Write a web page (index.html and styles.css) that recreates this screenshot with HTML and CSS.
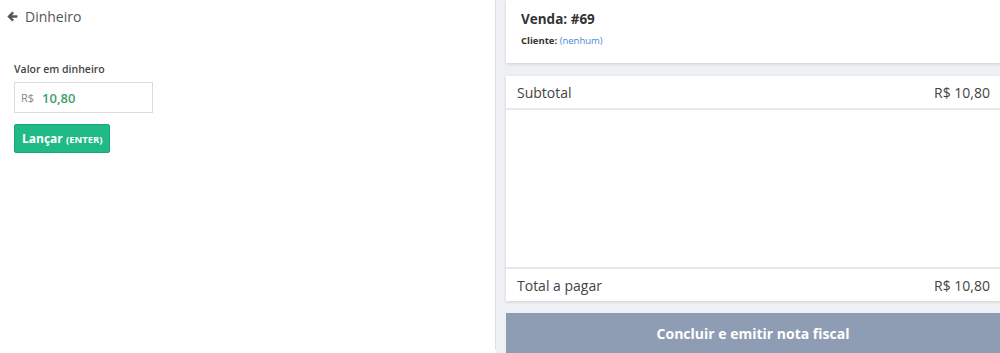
FILE: index.html
```html
<!DOCTYPE html>
<html lang="pt-BR">
<head>
    <meta charset="UTF-8">
    <meta name="viewport" content="width=device-width, initial-scale=1.0">
    <title>PDV - Pagamento</title>
    <link rel="stylesheet" href="styles.css">
</head>
<body>
    <div class="layout">
        <section class="payment">
            <header class="payment-header">
                <svg class="back-icon" viewBox="0 0 10 10" width="11" height="11">
                    <path d="M9.4 5H2.2M5.6 1.2L1.8 5 5.6 8.8" fill="none" stroke="#555" stroke-width="2.1"/>
                </svg>
                <span>Dinheiro</span>
            </header>
            <form class="cash-form">
                <label for="cash">Valor em dinheiro</label>
                <div class="money-input">
                    <span class="currency">R$</span>
                    <input type="text" id="cash" value="10,80">
                </div>
                <button type="button" class="btn-launch">Lançar <small>(ENTER)</small></button>
            </form>
        </section>
        <aside class="summary">
            <div class="card sale-info">
                <h2>Venda: #69</h2>
                <p><strong>Cliente:</strong> <a href="#">(nenhum)</a></p>
            </div>
            <div class="card totals">
                <div class="row">
                    <span>Subtotal</span>
                    <span>R$ 10,80</span>
                </div>
                <div class="items"></div>
                <div class="row total">
                    <span>Total a pagar</span>
                    <span>R$ 10,80</span>
                </div>
            </div>
            <button type="button" class="btn-finish">Concluir e emitir nota fiscal</button>
        </aside>
    </div>
</body>
</html>
```

FILE: styles.css
```css
body {
    margin: 0;
    font-family: "Open Sans", Arial, sans-serif;
    background-color: #ffffff;
    color: #444;
}
.layout {
    display: flex;
    height: 353px;
    overflow: hidden;
}
.payment {
    width: 495px;
    border-right: 1px solid #dcdfe5;
    height: 350px;
}
.payment-header {
    display: flex;
    align-items: center;
    gap: 7px;
    padding: 6px 0 0 7px;
    font-size: 14px;
    color: #555;
    height: 20px;
}
.cash-form {
    padding: 36px 0 0 14px;
}
.cash-form label {
    display: block;
    font-size: 10.5px;
    font-weight: 600;
    color: #444;
    margin-bottom: 6px;
}
.money-input {
    display: flex;
    align-items: center;
    width: 131px;
    height: 29px;
    border: 1px solid #dcdcdc;
    padding-left: 6px;
}
.currency {
    font-size: 11px;
    color: #888;
    margin-right: 8px;
}
.money-input input {
    border: none;
    outline: none;
    width: 80px;
    padding: 0;
    font-family: inherit;
    font-size: 13px;
    font-weight: 600;
    color: #3f9f6d;
}
.btn-launch {
    margin-top: 11px;
    height: 29px;
    padding: 0 7px;
    border: 1px solid #1aa878;
    border-radius: 2px;
    background-color: #1fba86;
    color: white;
    font-family: inherit;
    font-size: 12px;
    font-weight: 700;
}
.btn-launch small {
    font-size: 9.5px;
}
.summary {
    flex: 1;
    background-color: #eef0f4;
    padding-left: 10px;
    display: flex;
    flex-direction: column;
}
.summary > * {
    flex-shrink: 0;
}
.card {
    background: white;
    box-shadow: 0 1px 3px rgba(0, 0, 0, 0.14);
}
.sale-info {
    height: 63px;
    padding: 0 15px;
    box-sizing: border-box;
}
.sale-info h2 {
    margin: 0;
    padding-top: 10px;
    font-size: 13.5px;
    font-weight: 700;
    color: #333;
}
.sale-info p {
    margin: 6px 0 0;
    font-size: 9.5px;
    color: #333;
}
.sale-info a {
    color: #4a88d8;
    text-decoration: none;
}
.totals {
    margin-top: 13px;
    display: flex;
    flex-direction: column;
    height: 225px;
}
.row {
    display: flex;
    justify-content: space-between;
    align-items: center;
    height: 32px;
    padding: 0 10px 0 11px;
    font-size: 14px;
    color: #444;
    border-bottom: 2px solid #e6e8ec;
}
.row.total {
    border-bottom: none;
    border-top: 2px solid #e6e8ec;
}
.items {
    flex: 1;
}
.btn-finish {
    margin-top: 12px;
    height: 42px;
    border: none;
    background-color: #8e9db4;
    color: white;
    font-family: inherit;
    font-size: 14px;
    font-weight: 700;
    padding-bottom: 2px;
}
```
